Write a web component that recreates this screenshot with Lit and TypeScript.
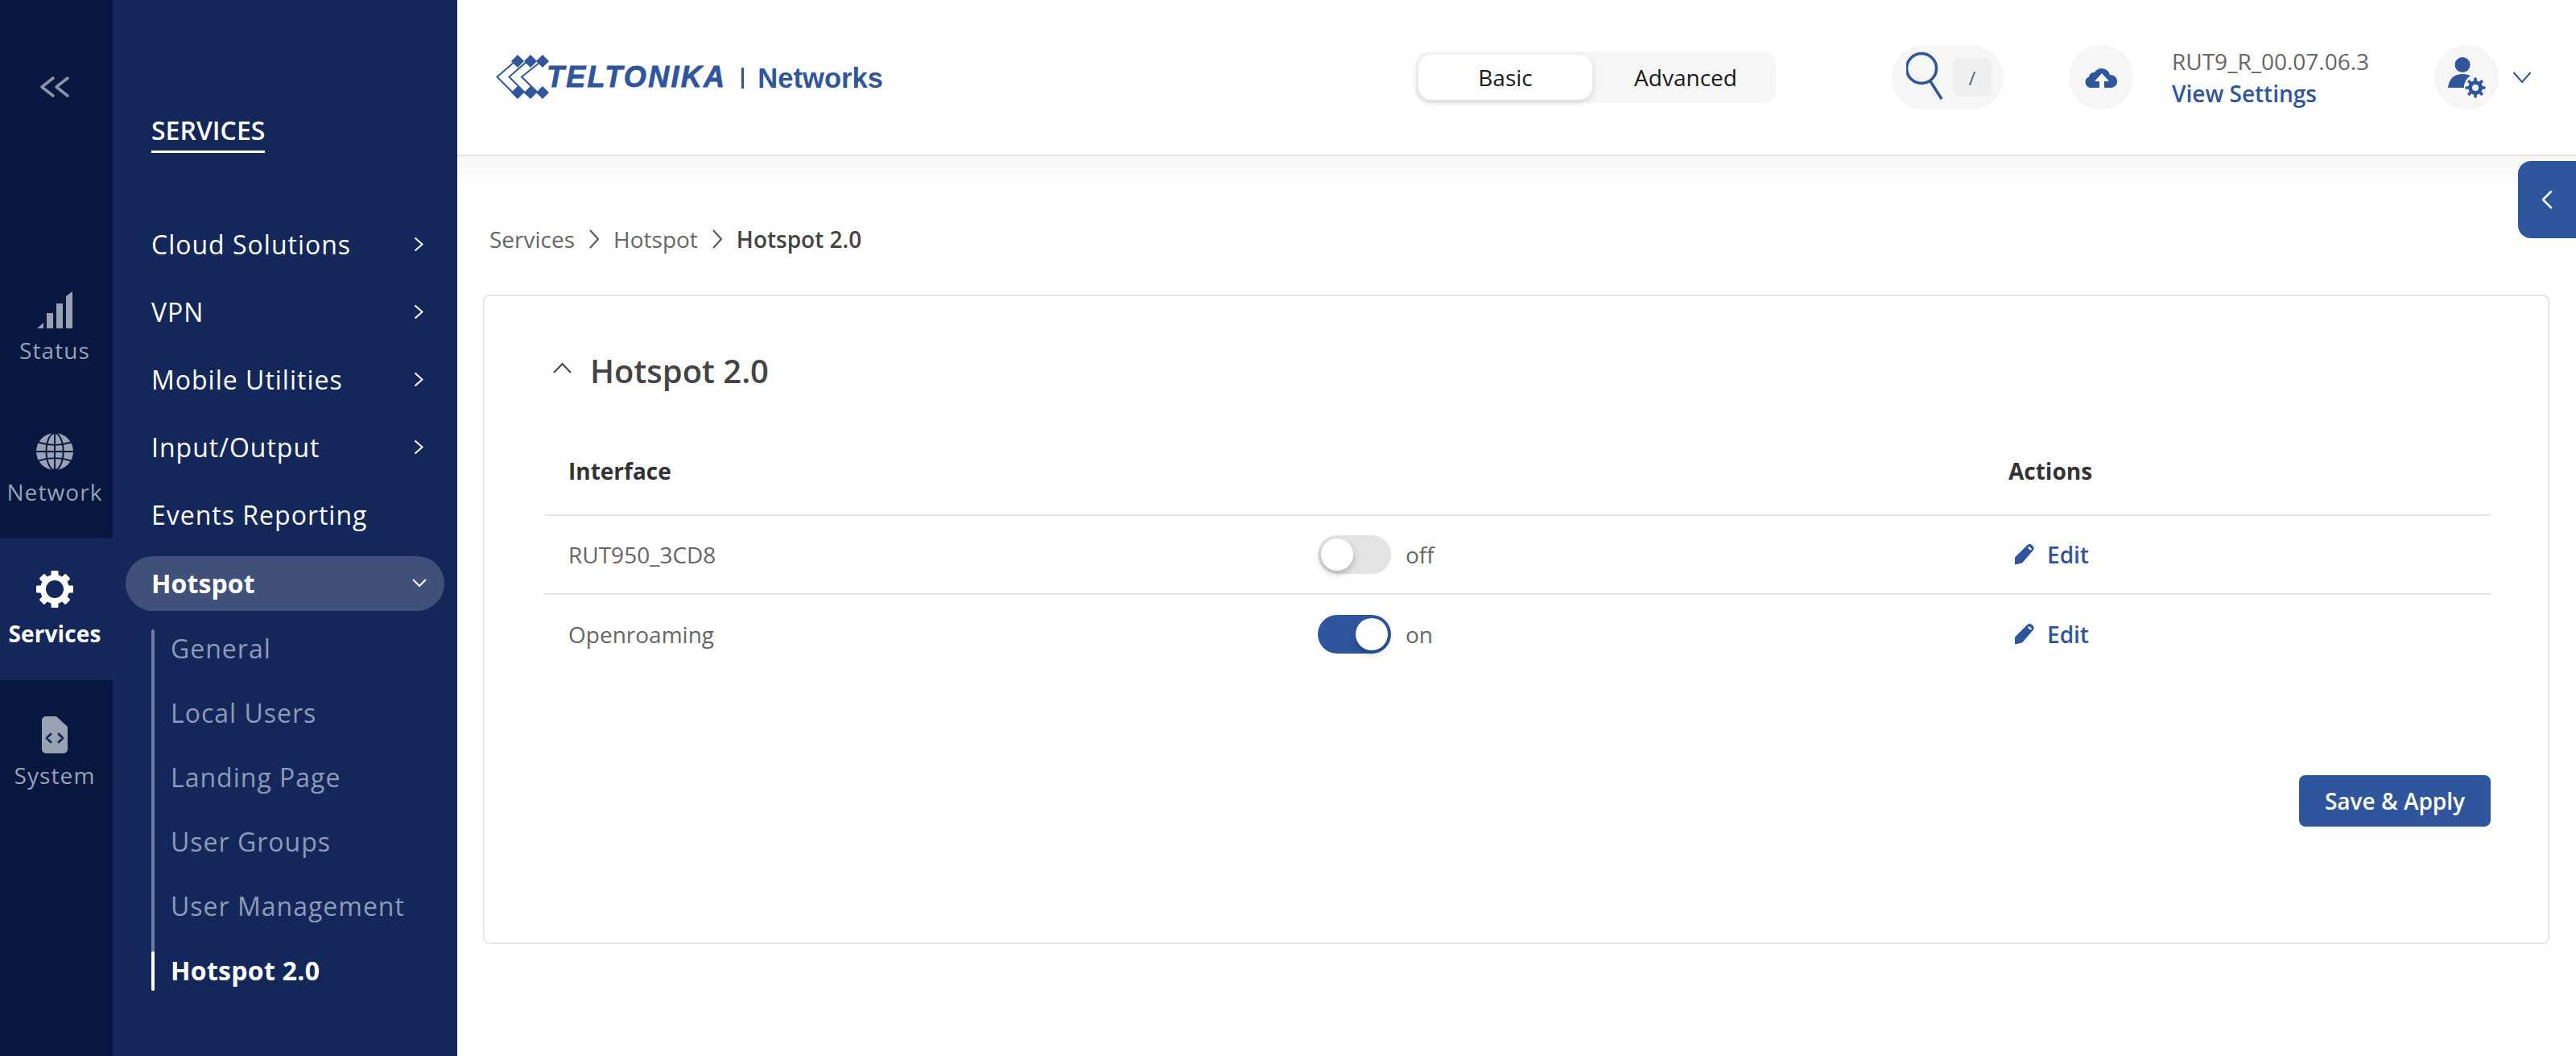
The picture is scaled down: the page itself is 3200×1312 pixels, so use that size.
import { LitElement, html, css, svg } from "lit";
import { customElement } from "lit/decorators.js";

const chevronRight = html`<svg class="nav-chev" width="12" height="19" viewBox="0 0 12 19"><path d="M1.500 1.500l9 8-9 8" fill="none" stroke="#fff" stroke-width="2"/></svg>`;
const gearTeeth = (n: number, w: number, y: number, h: number) =>
  Array.from({ length: n }, (_, i) => svg`<rect x=${-w / 2} y=${y} width=${w} height=${h} rx="1" transform=${`rotate(${(360 / n) * i})`}/>`);
const edit = html`<svg class="pen" width="24" height="26" viewBox="0 0 24 26"><path d="M0 25.500V16.500L15 1.500Q18-1 20 .5L23 3Q24.500 6 22 8.500L9 23.500Z" fill="#2f569c"/><path d="M17.500 3l3.500 3-1.500 1.700-3.500-3z" fill="#fff"/></svg>`;

@customElement("app-root")
export class AppRoot extends LitElement {
  static styles = css`
    :host { display: block; width: 3200px; height: 1312px; font-family: "Open Sans", "Liberation Sans", sans-serif; background: #fff; overflow: hidden; }
    * { box-sizing: border-box; }
    .page { display: grid; grid-template-columns: 140px 428px 1fr; height: 1312px; }

    .rail { background: #07173f; display: flex; flex-direction: column; align-items: stretch; }
    .collapse { height: 317px; padding: 94px 4px 0 0; display: flex; justify-content: center; align-items: flex-start; }
    .rail-item { height: 176px; padding: 45px 4px 0 0; display: flex; flex-direction: column; align-items: center; color: #99a2b3; font-size: 28px; line-height: 36px; letter-spacing: 1.1px; }
    .rail-item svg { display: block; height: 46px; margin-bottom: 9px; }
    .rail-item.active { background: #14275a; color: #fff; font-weight: 700; letter-spacing: .1px; padding-top: 40px; }
    .rail-item.active svg { margin-bottom: 14px; }

    .panel { background: #14275a; color: #fff; padding: 0 16px; display: flex; flex-direction: column; }
    .ptitle { margin: 140px 0 71px 32px; align-self: flex-start; font-size: 32px; line-height: 44px; font-weight: 600; border-bottom: 3px solid #fff; padding-bottom: 3px; height: 50px; }
    .nav { height: 84px; display: flex; align-items: center; justify-content: space-between; padding: 0 26px 0 32px; font-size: 32px; letter-spacing: 1px; }
    .nav.open { height: 68px; margin-top: 10px; background: #3f5079; border-radius: 34px; font-weight: 700; letter-spacing: .1px; padding: 0 22px 2px 32px; }
    .sub { margin: 6px 0 0 32px; display: flex; flex-direction: column; position: relative; }
    .sub::before { content: ""; position: absolute; left: 0; top: 17px; bottom: 14px; width: 4px; background: #6d7c9f; border-radius: 2px; }
    .sub a { height: 80px; display: flex; align-items: center; padding: 0 0 0 24px; color: #8e9ab6; font-size: 32px; letter-spacing: 1px; position: relative; }
    .sub a:last-child { color: #fff; font-weight: 700; letter-spacing: .3px; }
    .sub a:last-child::before { content: ""; position: absolute; left: 0; top: 17px; bottom: 14px; width: 4px; background: #fff; border-radius: 2px; }

    .main { display: flex; flex-direction: column; min-width: 0; position: relative; }
    header { height: 194px; border-bottom: 2px solid #e3e3e3; display: flex; align-items: center; padding: 0 0 0 48px; }
    .logo { display: flex; align-items: center; color: #2f569c; width: 1142px; }
    .logo svg { margin-right: -7px; display: block; }
    .lt { font-family: "Liberation Sans", sans-serif; font-style: italic; font-weight: 700; font-size: 36px; letter-spacing: 2.3px; -webkit-text-stroke: .8px #2f569c; line-height: 40px; }
    .lsep { width: 3px; height: 26px; background: #2f569c; margin: 2px 17px 0 19px; }
    .ln { font-family: "Liberation Sans", sans-serif; font-weight: 700; font-size: 34.6px; line-height: 40px; margin-top: 2px; }

    .seg { width: 448px; height: 64px; background: #f6f6f6; border-radius: 16px; padding: 4px; display: flex; font-size: 28px; color: #1a1a1a; }
    .seg span { display: flex; align-items: center; justify-content: center; }
    .seg .on { width: 216px; background: #fff; border-radius: 16px; box-shadow: 0 3px 8px rgba(0,0,0,.14); }
    .seg .off { flex: 1; padding-left: 8px; }
    .search { margin-left: 144px; width: 139px; height: 80px; background: #f6f6f6; border-radius: 40px; display: flex; align-items: center; padding-left: 18px; }
    .slash { margin-left: 10px; width: 48px; height: 48px; background: #eeeff1; border-radius: 8px; display: flex; align-items: center; justify-content: center; color: #666; font-size: 24px; }
    .circle { width: 80px; height: 80px; background: #f6f6f6; border-radius: 50%; display: flex; align-items: center; justify-content: center; flex: none; }
    .cloud { margin-left: 81px; }
    .ver { margin-left: 48px; width: 326px; display: flex; flex-direction: column; }
    .ver b { font-weight: 400; font-size: 28px; line-height: 40px; color: #666; }
    .ver a { font-weight: 600; font-size: 28px; line-height: 40px; color: #2f569c; }
    .caret { margin-left: 17px; }

    .tab { position: absolute; right: 0; top: 200px; width: 72px; height: 96px; background: #2f569c; border-radius: 16px 0 0 16px; display: flex; align-items: center; padding-left: 29px; }

    .content { flex: 1; background: linear-gradient(#f6f6f6, #fff 36px); padding: 0 33px; display: flex; flex-direction: column; }
    .crumbs { margin: 84px 0 0 7px; height: 38px; display: flex; align-items: center; font-size: 28px; line-height: 38px; color: #666; }
    .crumbs svg { margin: 0 18px 0 18px; }
    .crumbs b { color: #444; font-weight: 600; }
    .card { margin: 50px 0 0 -1px; height: 807px; border: 2px solid #e6e6e6; border-radius: 8px; padding: 0 71px 0 74px; display: flex; flex-direction: column; }
    .title { margin: 61px 0 0 11px; height: 62px; display: flex; align-items: center; color: #444; font-size: 40px; font-weight: 600; }
    .title svg { margin: 0 23px 6px 0; }
    .table { margin-top: 40px; display: grid; grid-template-columns: 961px 858px 1fr; }
    .cell { display: flex; align-items: center; height: 98px; border-bottom: 2px solid #e3e7ee; font-size: 28px; color: #666; }
    .first { padding-left: 30px; }
    .h { color: #333; font-weight: 700; height: 110px; }
    .last { border-bottom: none; }
    .tg { width: 91px; height: 48px; border-radius: 24px; background: #e3e3e3; padding: 4px; margin-right: 18px; display: flex; }
    .tg i { width: 40px; height: 40px; border-radius: 50%; background: #fff; box-shadow: 0 4px 8px rgba(0,0,0,.22); }
    .tg.on { background: #2f569c; justify-content: flex-end; padding-right: 4px; }
    .act { padding-left: 8px; color: #2f569c; font-weight: 600; }
    .pen { margin-right: 16px; }
    .foot { margin-top: 126px; display: flex; justify-content: flex-end; }
    .save { width: 238px; height: 64px; border-radius: 8px; background: #2f569c; color: #fff; display: flex; align-items: center; justify-content: center; font-size: 28px; font-weight: 600; }
  `;

  render() {
    const subs = ["General", "Local Users", "Landing Page", "User Groups", "User Management", "Hotspot 2.0"];
    return html`<div class="page">
      <aside class="rail">
        <div class="collapse"><svg width="38" height="30" viewBox="0 0 38 30"><path d="M17 3L3 14l14 11M35 3L21 14l14 11" fill="none" stroke="#8b93a6" stroke-width="3.5" stroke-linecap="round" stroke-linejoin="round"/></svg></div>
        <div class="rail-item"><svg width="44" height="46" viewBox="0 0 44 46"><g fill="#99a2b3"><path d="M0 46l8-7v7z"/><rect x="12" y="27" width="8" height="19"/><rect x="24" y="15" width="8" height="31"/><path d="M36 6l8-6v46h-8z"/></g></svg><span>Status</span></div>
        <div class="rail-item"><svg width="48" height="46" viewBox="0 0 48 48"><circle cx="24" cy="24" r="24" fill="#99a2b3"/><g fill="none" stroke="#07173f" stroke-width="2"><ellipse cx="24" cy="24" rx="11" ry="24"/><path d="M24 0v48M0 24h48M3 12q21 7 42 0M3 36q21-7 42 0"/></g></svg><span>Network</span></div>
        <div class="rail-item active"><svg width="46" height="46" viewBox="-23 -23 46 46"><g fill="#fff">${gearTeeth(8, 9, -23, 9)}</g><circle r="14.5" fill="none" stroke="#fff" stroke-width="7"/></svg><span>Services</span></div>
        <div class="rail-item"><svg width="32" height="46" viewBox="0 0 32 46"><path d="M5 0h13l14 13v28a5 5 0 0 1-5 5H5a5 5 0 0 1-5-5V5a5 5 0 0 1 5-5z" fill="#99a2b3"/><path d="M11 22l-5 5 5 5M21 22l5 5-5 5" fill="none" stroke="#14275a" stroke-width="3" stroke-linecap="round" stroke-linejoin="round"/></svg><span>System</span></div>
      </aside>
      <nav class="panel">
        <div class="ptitle">SERVICES</div>
        ${["Cloud Solutions", "VPN", "Mobile Utilities", "Input/Output"].map((n) => html`<div class="nav"><span>${n}</span>${chevronRight}</div>`)}
        <div class="nav"><span>Events Reporting</span></div>
        <div class="nav open"><span>Hotspot</span><svg width="18" height="12" viewBox="0 0 18 12"><path d="M1 2l8 8 8-8" fill="none" stroke="#fff" stroke-width="2"/></svg></div>
        <div class="sub">${subs.map((s) => html`<a>${s}</a>`)}</div>
      </nav>
      <div class="main">
        <header>
          <div class="logo">
            <svg width="70" height="60" viewBox="0 0 70 60">
              <g fill="#2f569c"><path d="M27 2l8 8-8 8-8-8zM43 2l8 8-8 8-8-8zM58 2l8 8-8 8-8-8zM27 41l8 8-8 8-8-8zM43 41l8 8-8 8-8-8zM58 41l8 8-8 8-8-8z"/></g>
              <g fill="none" stroke="#2f569c" stroke-width="2"><path d="M24 10L1.500 29.500 25 53"/><path d="M39 10L16.500 29.500 39 52"/><path d="M54 12L32 29.500 54 51"/></g>
            </svg>
            <span class="lt">TELTONIKA</span><span class="lsep"></span><span class="ln">Networks</span>
          </div>
          <div class="seg"><span class="on">Basic</span><span class="off">Advanced</span></div>
          <div class="search">
            <svg width="48" height="66" viewBox="0 0 48 66"><circle cx="19" cy="22" r="18.5" fill="none" stroke="#2f569c" stroke-width="3.5"/><path d="M30 38l14 22" fill="none" stroke="#2f569c" stroke-width="3.5"/></svg>
            <span class="slash">/</span>
          </div>
          <div class="circle cloud"><svg width="40" height="28" viewBox="0 0 40 28"><path d="M7 27a7 7 0 0 1-2-13.500A6 6 0 0 1 12 8 10.500 10.500 0 0 1 31 11 8 8 0 0 1 33 27z" fill="#2f569c"/><path d="M21 9l9 10h-6v8h-6v-8h-6z" fill="#fff"/></svg></div>
          <div class="ver"><b>RUT9_R_00.07.06.3</b><a>View Settings</a></div>
          <div class="circle"><svg width="48" height="52" viewBox="0 0 48 52"><circle cx="19" cy="10.500" r="9.500" fill="#2f569c"/><path d="M1 39Q3 22 19 22q5 0 10 2-8 5-8 15z" fill="#2f569c"/><circle cx="35" cy="39" r="14" fill="#f6f6f6"/><g fill="#2f569c" transform="translate(35 39)">${gearTeeth(8, 3.6, -12.500, 5)}</g><circle cx="35" cy="39" r="6.500" fill="none" stroke="#2f569c" stroke-width="5"/></svg></div>
          <svg class="caret" width="24" height="16" viewBox="0 0 24 16"><path d="M1.500 2l10.500 12L22.500 2" fill="none" stroke="#2f569c" stroke-width="2"/></svg>
        </header>
        <div class="tab"><svg width="14" height="24" viewBox="0 0 14 24"><path d="M12 2L2 12l10 10" fill="none" stroke="#fff" stroke-width="2.500" stroke-linecap="round" stroke-linejoin="round"/></svg></div>
        <div class="content">
          <div class="crumbs"><span>Services</span>
            <svg width="12" height="26" viewBox="0 0 12 26"><path d="M1 2l10 11L1 24" fill="none" stroke="#555" stroke-width="2"/></svg><span>Hotspot</span>
            <svg width="12" height="26" viewBox="0 0 12 26"><path d="M1 2l10 11L1 24" fill="none" stroke="#555" stroke-width="2"/></svg><b>Hotspot 2.0</b></div>
          <section class="card">
            <div class="title"><svg width="23" height="14" viewBox="0 0 23 14"><path d="M1 13L11.500 2 22 13" fill="none" stroke="#444" stroke-width="2"/></svg><span>Hotspot 2.0</span></div>
            <div class="table">
              <div class="cell h first">Interface</div><div class="cell h"></div><div class="cell h">Actions</div>
              <div class="cell first">RUT950_3CD8</div>
              <div class="cell"><div class="tg"><i></i></div>off</div>
              <div class="cell act">${edit}Edit</div>
              <div class="cell first last">Openroaming</div>
              <div class="cell last"><div class="tg on"><i></i></div>on</div>
              <div class="cell act last">${edit}Edit</div>
            </div>
            <div class="foot"><div class="save">Save &amp; Apply</div></div>
          </section>
        </div>
      </div>
    </div>`;
  }
}
